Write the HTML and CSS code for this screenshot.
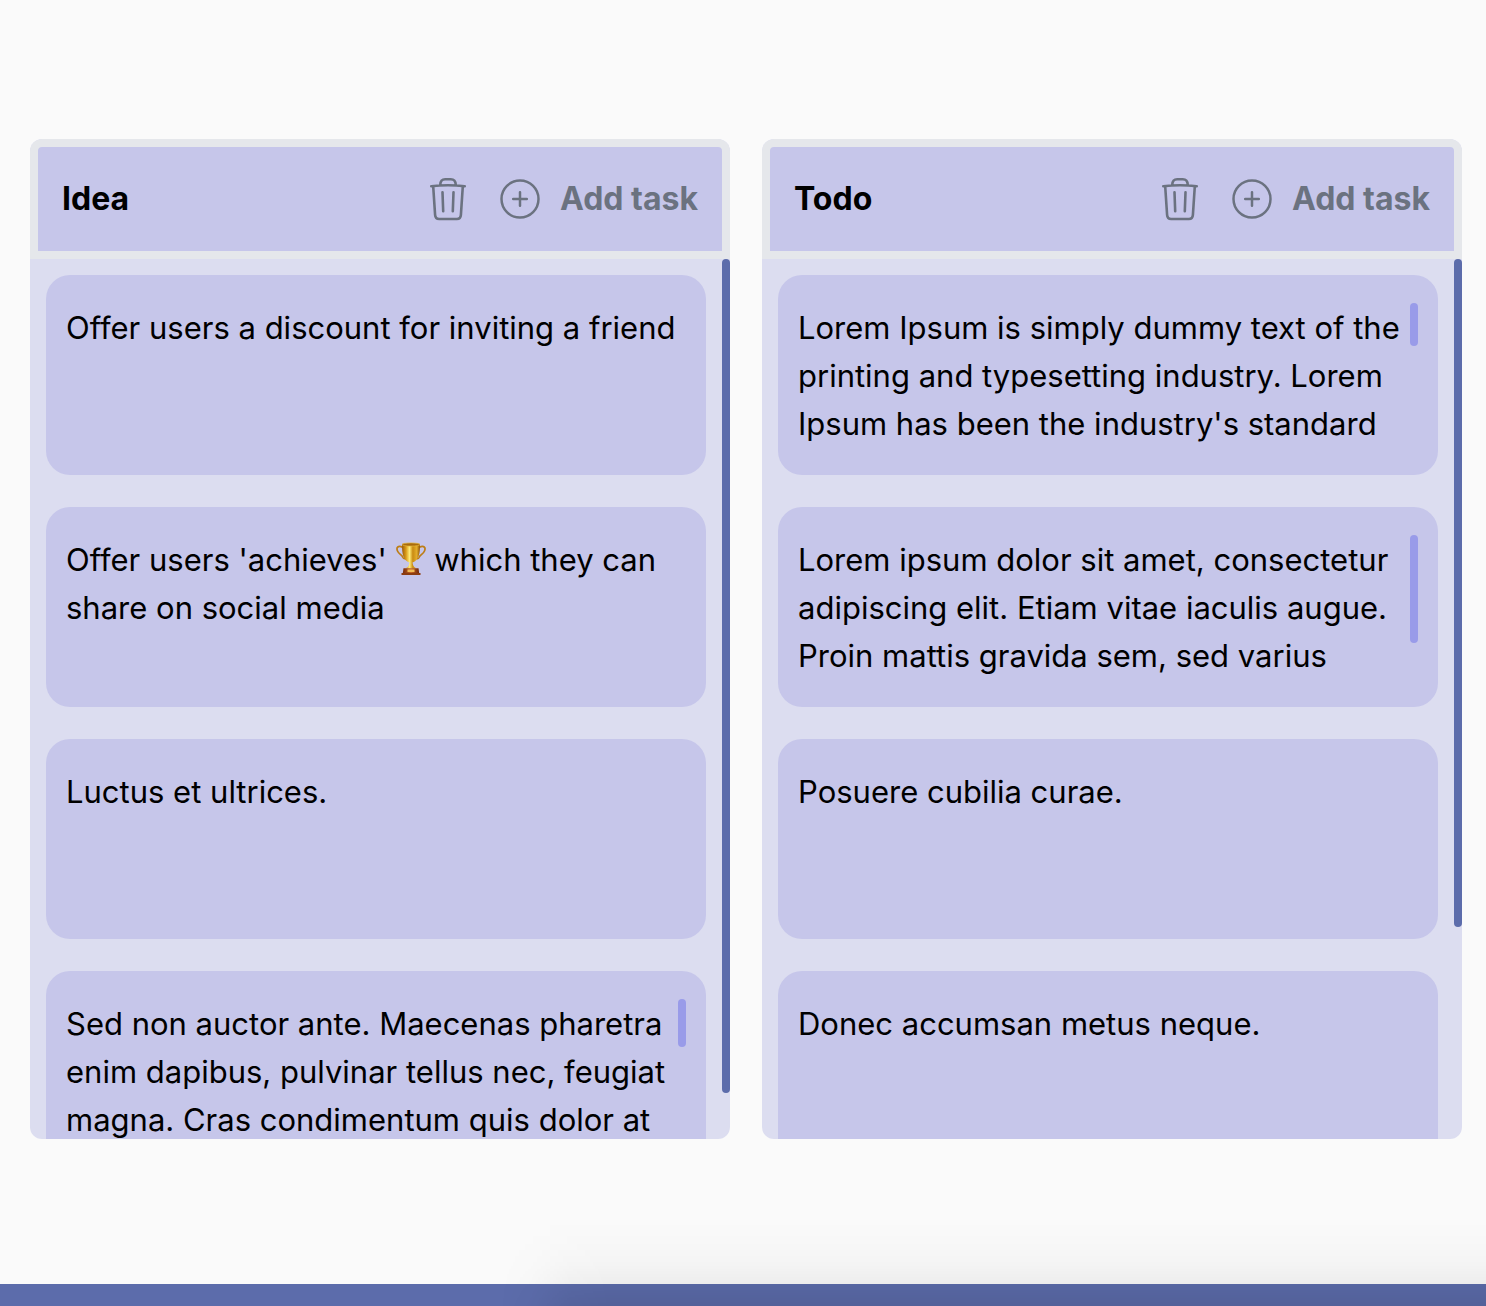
FILE: index.html
```html
<!DOCTYPE html>
<html lang="en">
<head>
<meta charset="utf-8">
<meta name="viewport" content="width=device-width, initial-scale=1">
<title>Task board</title>
<link rel="stylesheet" href="styles.css">
</head>
<body>
<svg class="sprite" aria-hidden="true">
  <symbol id="trash" viewBox="0 0 36 44" fill="none" stroke="currentColor" stroke-width="2.6" stroke-linecap="round" stroke-linejoin="round">
    <path d="M1.300 9.300C12 8 24 8 34.700 9.300M3.200 9.300l1.900 28.500c.2 2.900 1.400 4.200 4 4.200h17.800c2.600 0 3.800-1.300 4-4.200l1.900-28.500M10.200 8c.2-4.300 1.600-5.700 5-5.700h5.600c3.400 0 4.800 1.400 5 5.700M12.500 15.300l.7 18.900M23.500 15.300l-.7 18.900"/>
  </symbol>
  <symbol id="plus" viewBox="0 0 40 40" fill="none" stroke="currentColor" stroke-width="2.5" stroke-linecap="round">
    <circle cx="20" cy="20" r="18.500"/><path d="M20 13.200v13.600M13.200 20h13.600"/>
  </symbol>
</svg>
<main class="board">
  <section class="column">
    <header class="column-header">
      <h2 class="title">Idea</h2>
      <button class="action" type="button" aria-label="Delete column"><svg class="trash"><use href="#trash"/></svg></button>
      <button class="action" type="button"><svg class="plus"><use href="#plus"/></svg>Add task</button>
    </header>
    <div class="tasks">
      <article class="card"><p class="text">Offer users a discount for inviting a friend</p></article>
      <article class="card"><p class="text">Offer users 'achieves' <svg class="trophy" viewBox="0 0 30 34" aria-hidden="true">
        <defs>
          <linearGradient id="gold"><stop offset="0" stop-color="#9b5a08"/><stop offset=".22" stop-color="#d99a17"/><stop offset=".42" stop-color="#ffec78"/><stop offset=".6" stop-color="#c98a12"/><stop offset=".82" stop-color="#e3ad2b"/><stop offset="1" stop-color="#8c5006"/></linearGradient>
          <linearGradient id="base"><stop offset="0" stop-color="#792d0b"/><stop offset=".5" stop-color="#c96722"/><stop offset="1" stop-color="#702608"/></linearGradient>
        </defs>
        <path d="M7 5.500C2 3 0 5.500 1.500 9c1.200 3.200 4.500 3.500 5.500 6.500.6 1.500 2.500 1.500 4 .5M23 5.500c5-2.500 7 0 5.500 3.500-1.200 3.200-4.500 3.500-5.500 6.500-.6 1.500-2.500 1.500-4 .5" fill="none" stroke="#bd7d16" stroke-width="1.700"/>
        <path d="M6 2.500c0 9 1 15.500 7.500 18l-.6 2.600c-.3 1.600-1.700 2.400-3.700 3.400h11.600c-2-1-3.400-1.800-3.700-3.400l-.6-2.600c6.500-2.500 7.500-9 7.500-18z" fill="url(#gold)"/>
        <ellipse cx="15" cy="2.500" rx="9" ry="1.600" fill="#a96b0d" stroke="#e6b83c" stroke-width=".7"/>
        <path d="M7.500 26.300h15l.7 5H6.800z" fill="url(#base)"/><path d="M11.500 27.500h7v2.500h-7z" fill="#f0bd55"/><path d="M5.500 31h19v2h-19z" fill="#8c3c10"/>
      </svg> which they can share on social media</p></article>
      <article class="card"><p class="text">Luctus et ultrices.</p></article>
      <article class="card"><p class="text">Sed non auctor ante. Maecenas pharetra enim dapibus, pulvinar tellus nec, feugiat magna. Cras condimentum quis dolor at</p><span class="thumb thumb-medium"></span></article>
      <span class="scroll scroll-long"></span>
    </div>
  </section>
  <section class="column">
    <header class="column-header">
      <h2 class="title">Todo</h2>
      <button class="action" type="button" aria-label="Delete column"><svg class="trash"><use href="#trash"/></svg></button>
      <button class="action" type="button"><svg class="plus"><use href="#plus"/></svg>Add task</button>
    </header>
    <div class="tasks">
      <article class="card"><p class="text">Lorem Ipsum is simply dummy text of the printing and typesetting industry. Lorem Ipsum has been the industry's standard</p><span class="thumb thumb-short"></span></article>
      <article class="card"><p class="text">Lorem ipsum dolor sit amet, consectetur adipiscing elit. Etiam vitae iaculis augue. Proin mattis gravida sem, sed varius</p><span class="thumb thumb-long"></span></article>
      <article class="card"><p class="text">Posuere cubilia curae.</p></article>
      <article class="card"><p class="text">Donec accumsan metus neque.</p></article>
      <span class="scroll scroll-short"></span>
    </div>
  </section>
</main>
<footer class="footer"></footer>
<div class="shade" aria-hidden="true"></div>
</body>
</html>
```
FILE: styles.css
```css
* { box-sizing: border-box; }
body {
  position: relative;
  display: flex;
  flex-direction: column;
  height: 100vh;
  margin: 0;
  overflow: hidden;
  background: #fafafa;
  color: #000;
  font-family: Inter, "Liberation Sans", sans-serif;
  font-size: 31px;
  line-height: 48px;
}
.sprite { position: absolute; width: 0; height: 0; }
.board {
  flex: 1;
  min-height: 0;
  display: flex;
  gap: 32px;
  padding: 139px 24px 145px 30px;
}
.column {
  flex: 1;
  min-width: 0;
  display: flex;
  flex-direction: column;
  overflow: hidden;
  border-radius: 12px;
  background: #dcddf0;
}
.column-header {
  flex: none;
  display: flex;
  align-items: center;
  height: 120px;
  padding: 0 24px;
  border: 8px solid #e5e7eb;
  border-radius: 12px 12px 0 0;
  background: #c6c6ea;
  font-size: 32px;
}
.title { flex: 1; margin: 0; font-size: 32px; font-weight: 700; }
.action {
  display: flex;
  align-items: center;
  gap: 20px;
  margin: 0 0 0 34px;
  padding: 0;
  border: 0;
  background: none;
  color: #6b7280;
  font: inherit;
  font-weight: 700;
  cursor: pointer;
}
.trash { width: 36px; height: 44px; }
.plus { width: 40px; height: 40px; }
.tasks {
  position: relative;
  flex: 1;
  min-height: 0;
  display: flex;
  flex-direction: column;
  gap: 32px;
  padding: 16px 24px 0 16px;
  overflow: hidden;
}
.card {
  position: relative;
  flex: none;
  height: 200px;
  padding: 29px 20px 27px;
  border-radius: 24px;
  background: #c6c6ea;
}
.text { height: 144px; margin: 0; overflow: hidden; }
.trophy { width: 30px; height: 34px; vertical-align: -5px; }
.thumb {
  position: absolute;
  top: 28px;
  right: 20px;
  width: 8px;
  border-radius: 4px;
  background: #999be9;
}
.thumb-short { height: 43px; }
.thumb-medium { height: 48px; }
.thumb-long { height: 108px; }
.scroll {
  position: absolute;
  top: 0;
  right: 0;
  width: 8px;
  border-radius: 4px;
  background: #5c6cab;
}
.scroll-long { height: 834px; }
.scroll-short { height: 668px; }
.footer { flex: none; height: 22px; background: #5c6cab; }
.shade {
  position: absolute;
  right: 0;
  bottom: 0;
  left: 500px;
  height: 86px;
  background: linear-gradient(transparent, rgba(0, 0, 0, 0.008) 25%, rgba(0, 0, 0, 0.022) 52%, rgba(0, 0, 0, 0.05) 74%, rgba(0, 0, 0, 0.1));
  mask-image: linear-gradient(to right, transparent, rgba(0, 0, 0, 0.2) 30px, rgba(0, 0, 0, 0.8) 70px, #000 110px);
}
```
